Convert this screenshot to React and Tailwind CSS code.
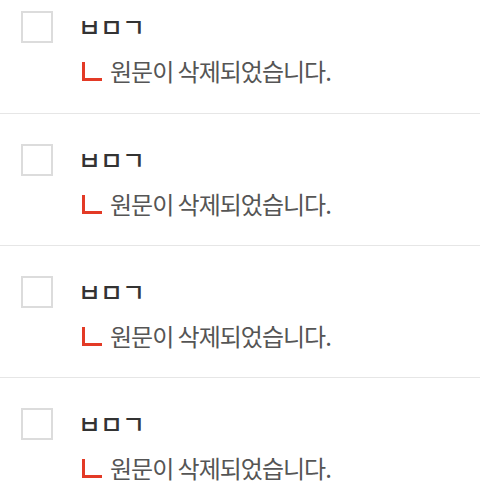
import React from 'react';

const items = [1, 2, 3, 4];

function Row({ first }) {
    return (
        <div className={`flex items-start pl-[21px] border-[#e6e6e6] ${first ? 'pt-[11px] h-[113px]' : 'pt-[30px] h-[132px] border-t'}`}>
            <div className="w-[32px] h-[32px] border-2 border-[#dcdcdc] bg-white shrink-0" />
            <div className="ml-[25px] flex flex-col">
                <p className="text-[25px] leading-none font-medium text-[#333] mt-[3px] tracking-[-1px]">ㅂㅁㄱ</p>
                <div className="flex items-center mt-[20px]">
                    <span className="w-[20px] h-[19px] border-l-[3px] border-b-[3px] border-[#e33a26] ml-[4px]" />
                    <span className="ml-[8px] text-[24px] leading-none tracking-[-1px] text-[#555]">원문이 삭제되었습니다.</span>
                </div>
            </div>
        </div>
    );
}

export default function App() {
    return (
        <div className="w-[480px] h-[497px] overflow-hidden bg-white" style={{ fontFamily: '"Noto Sans CJK KR", "Noto Sans", sans-serif' }}>
            {items.map((i, idx) => (
                <Row key={i} first={idx === 0} />
            ))}
        </div>
    );
}
